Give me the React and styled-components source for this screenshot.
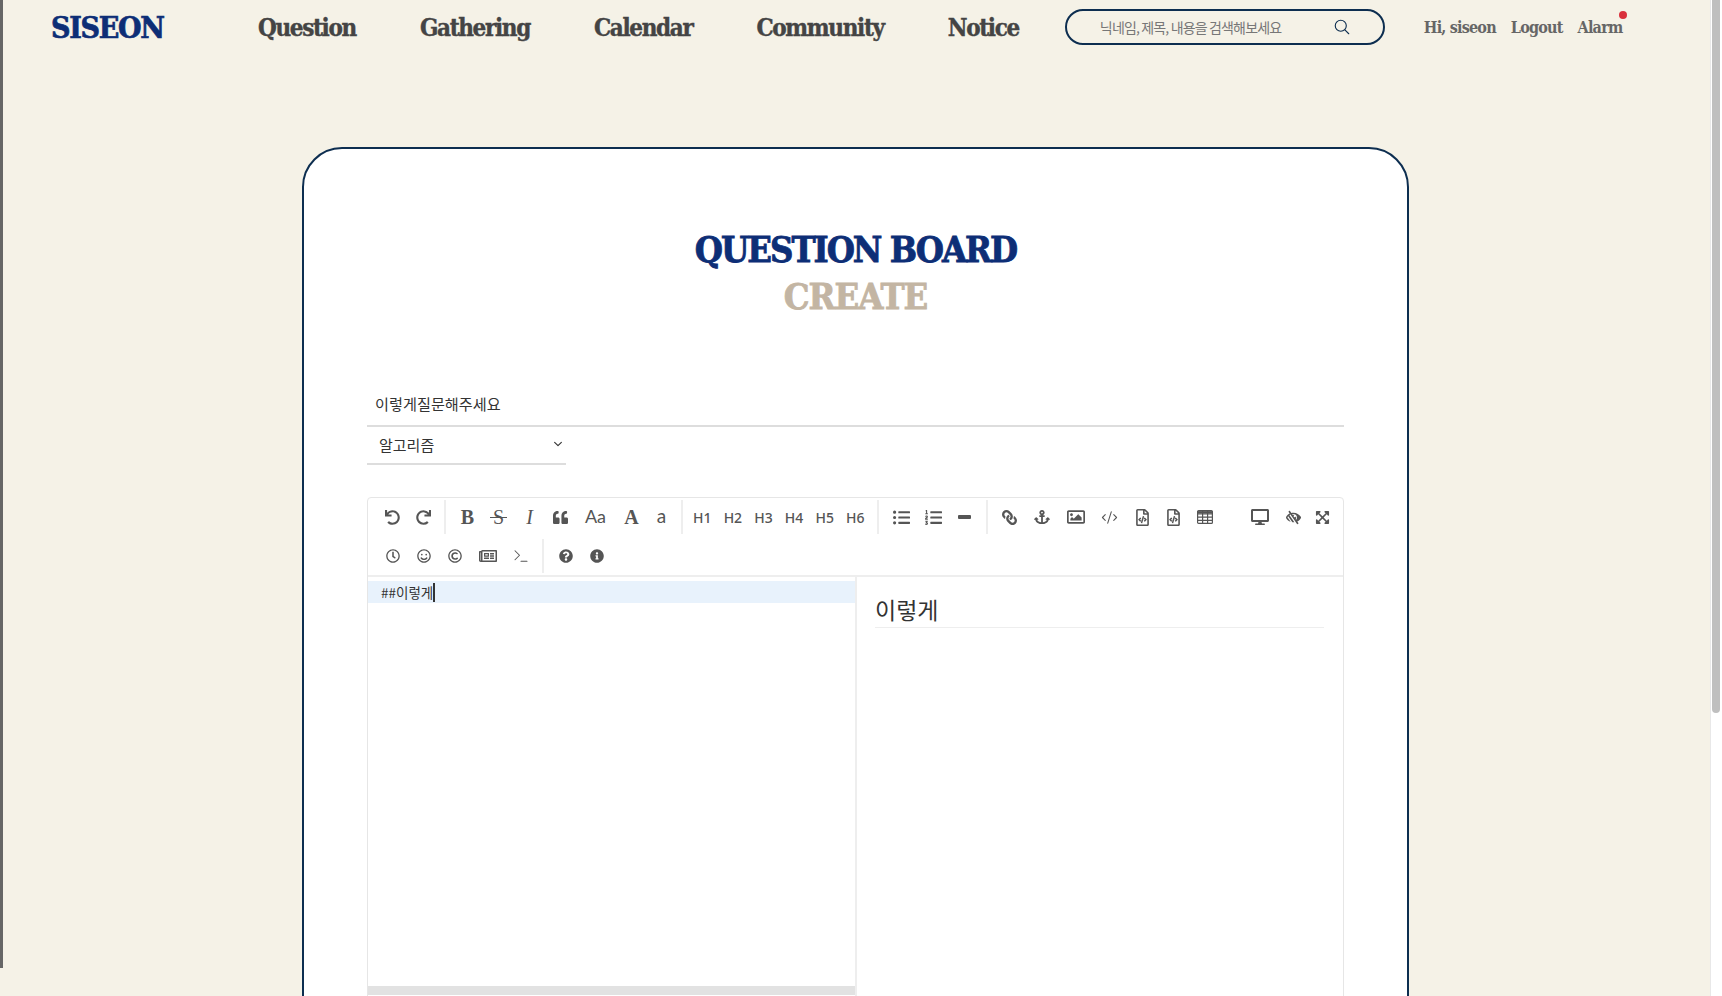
import React from "react";
import styled, { createGlobalStyle } from "styled-components";
import {
  FaUndo, FaRedo, FaQuoteLeft, FaListUl, FaListOl,
  FaLink, FaAnchor, FaRegImage, FaRegFileCode, FaDesktop, FaLowVision, FaExpandArrowsAlt,
  FaRegClock, FaRegSmile, FaRegCopyright, FaRegNewspaper, FaQuestionCircle, FaInfoCircle,
} from "react-icons/fa";
import { IoSearchOutline, IoChevronDown } from "react-icons/io5";
import { CodeXml, Terminal } from "lucide-react";

const GlobalStyle = createGlobalStyle`
  html, body { margin: 0; padding: 0; overflow: hidden; }
  * { box-sizing: border-box; }
  body { font-family: "Noto Sans CJK KR", "Noto Sans", sans-serif; }
`;

const slab = `"DejaVu Serif Condensed", "DejaVu Serif", serif`;

const Screen = styled.div`
  display: flex;
  width: 1722px;
  height: 996px;
  overflow: hidden;
  background: #f5f2e7;
`;
const WindowEdge = styled.div`
  flex: 0 0 3px;
  height: 968px;
  background: #666;
`;
const Page = styled.div`
  flex: 1;
  min-width: 0;
`;
const ScrollTrack = styled.div`
  flex: 0 0 12px;
  background: #fff;
  border-left: 1px solid #e8e8e8;
  padding: 0 2px 0 1px;
`;
const ScrollThumb = styled.div`
  height: 713px;
  background: #bfbfbf;
  border-radius: 0 0 4px 4px;
`;

const Header = styled.header`
  display: flex;
  align-items: center;
  height: 54px;
  padding-left: 48px;
`;
const Logo = styled.div`
  flex: 0 0 207px;
  font: 700 30px ${slab};
  color: #0d2e76;
  letter-spacing: -1.3px;
  -webkit-text-stroke: 0.7px #0d2e76;
`;
const Nav = styled.nav`
  display: flex;
  gap: 64px;
`;
const NavLink = styled.a`
  font: 700 24px ${slab};
  color: #444;
  letter-spacing: -1.35px;
  -webkit-text-stroke: 0.4px #444;
`;
const Search = styled.div`
  display: flex;
  align-items: center;
  justify-content: space-between;
  width: 320px;
  height: 36px;
  margin-left: 46px;
  padding: 0 32px 0 33px;
  border: 2px solid #0d2e50;
  border-radius: 18px;
  font-size: 14px;
  color: #777;
  letter-spacing: -0.85px;
  svg { color: #0d2e50; }
`;
const UserMenu = styled.div`
  display: flex;
  gap: 15px;
  margin-left: 39px;
`;
const UserLink = styled.a`
  position: relative;
  font: 700 16px ${slab};
  color: #666;
  letter-spacing: -0.8px;
`;
const AlertDot = styled.span`
  position: absolute;
  top: -7px;
  right: -5px;
  width: 8px;
  height: 8px;
  border-radius: 50%;
  background: #d9303c;
`;

const Card = styled.main`
  width: 1107px;
  height: 1200px;
  margin: 93px 0 0 299px;
  padding: 77px 63px 0;
  background: #fff;
  border: 2px solid #0d2e50;
  border-radius: 40px 40px 0 0;
`;
const Title = styled.h1`
  margin: 0;
  text-align: center;
  font: 700 36px/47px ${slab};
  letter-spacing: ${(p) => p.$spacing}px;
  color: ${(p) => p.$color};
  -webkit-text-stroke: 0.8px ${(p) => p.$color};
`;
const TitleInput = styled.div`
  margin-top: 63px;
  height: 44px;
  padding: 9px 8px 0;
  border-bottom: 2px solid #ddd;
  font-size: 15.2px;
  color: #333;
`;
const Select = styled.div`
  display: flex;
  align-items: center;
  justify-content: space-between;
  width: 199px;
  height: 38px;
  padding: 0 2px 2px 12px;
  border-bottom: 2px solid #ddd;
  font-size: 15px;
  color: #333;
`;
const Editor = styled.section`
  margin-top: 32px;
  border: 1px solid #e6e6e6;
  border-radius: 4px 4px 0 0;
`;
const Toolbar = styled.div`
  height: 79px;
  padding: 0 6px 0 9px;
  border-bottom: 2px solid #eee;
`;
const ToolRow = styled.div`
  display: flex;
  align-items: center;
  height: 38.5px;
`;
const Tool = styled.button`
  display: flex;
  align-items: center;
  justify-content: center;
  flex: 0 0 ${(p) => p.$w || 31}px;
  height: 34px;
  padding: 0;
  border: 0;
  background: none;
  color: #555;
  font: 500 14px "Noto Sans", sans-serif;
  svg { transform: ${(p) => (p.$flip ? "scaleX(-1)" : "none")}; }
`;
const Glyph = styled.span`
  font: ${(p) => p.$font};
  position: relative;
  top: ${(p) => p.$top || 0}px;
`;
const StruckGlyph = styled(Glyph)`
  &::after {
    content: "";
    position: absolute;
    left: -3px;
    right: -3px;
    top: 50%;
    height: 1px;
    background: #555;
  }
`;
const MinusBar = styled.span`
  width: 13px;
  height: 4px;
  border-radius: 1px;
  background: #555;
`;
const Divider = styled.span`
  flex: 0 0 2px;
  height: 34px;
  margin: 0 ${(p) => p.$right ?? 6}px 0 ${(p) => p.$left ?? 6}px;
  background: #eee;
`;
const Spacer = styled.span`
  flex: 1;
`;
const Panes = styled.div`
  display: flex;
  height: 470px;
`;
const SourcePane = styled.div`
  position: relative;
  flex: 0 0 489px;
  padding-top: 4px;
  border-right: 2px solid #eee;
`;
const ActiveLine = styled.div`
  display: flex;
  align-items: center;
  height: 22px;
  padding-left: 13px;
  background: #e8f2fc;
  font-size: 13.5px;
  color: #333;
`;
const Caret = styled.span`
  width: 2px;
  height: 19px;
  background: #333;
`;
const HScroll = styled.div`
  position: absolute;
  left: 0;
  right: 0;
  bottom: 52px;
  height: 9px;
  background: #e2e2e2;
`;
const PreviewPane = styled.div`
  flex: 1;
  padding: 17px 19px 0 18px;
`;
const PreviewHeading = styled.h2`
  margin: 0;
  height: 34px;
  border-bottom: 1px solid #eee;
  font: 400 23px/30px "Noto Sans CJK KR", sans-serif;
  color: #333;
`;

const TableIcon = () => (
  <svg width="16" height="14" viewBox="0 0 16 14" fill="none" stroke="#555" strokeWidth="1.2">
    <rect x="0.6" y="0.6" width="14.8" height="12.8" rx="1" />
    <path d="M0.6 4h14.8M0.6 7.2h14.8M0.6 10.4h14.8M5.6 .6v12.8M10.6 .6v12.8" />
    <path d="M0.6 2.4h14.8" strokeWidth="2.6" />
  </svg>
);

const App = () => {
  return (
    <Screen>
      <GlobalStyle />
      <WindowEdge />
      <Page>
        <Header>
          <Logo>SISEON</Logo>
          <Nav>
            <NavLink>Question</NavLink>
            <NavLink>Gathering</NavLink>
            <NavLink>Calendar</NavLink>
            <NavLink>Community</NavLink>
            <NavLink>Notice</NavLink>
          </Nav>
          <Search>
            닉네임, 제목, 내용을 검색해보세요
            <IoSearchOutline size={18} />
          </Search>
          <UserMenu>
            <UserLink>Hi, siseon</UserLink>
            <UserLink>Logout</UserLink>
            <UserLink>Alarm<AlertDot /></UserLink>
          </UserMenu>
        </Header>
        <Card>
          <Title $color="#0d2e76" $spacing={-2}>QUESTION BOARD</Title>
          <Title $color="#c3b5a3" $spacing={-1}>CREATE</Title>
          <TitleInput>이렇게질문해주세요</TitleInput>
          <Select>
            알고리즘
            <IoChevronDown size={12} />
          </Select>
          <Editor>
            <Toolbar>
              <ToolRow>
                <Tool><FaUndo size={15} /></Tool>
                <Tool><FaRedo size={15} /></Tool>
                <Divider $left={5} />
                <Tool><Glyph $font={`700 20px "Liberation Serif", serif`}>B</Glyph></Tool>
                <Tool><StruckGlyph $font={`400 20px "Liberation Serif", serif`}>S</StruckGlyph></Tool>
                <Tool><Glyph $font={`italic 400 20px "Liberation Serif", serif`}>I</Glyph></Tool>
                <Tool><FaQuoteLeft size={15} /></Tool>
                <Tool $w={39}><Glyph $top={-1} $font={`400 18px Lato, sans-serif`}>Aa</Glyph></Tool>
                <Tool $w={33}><Glyph $font={`700 20px "Liberation Serif", serif`}>A</Glyph></Tool>
                <Tool $w={27}><Glyph $top={-2} $font={`400 19px Lato, sans-serif`}>a</Glyph></Tool>
                <Divider $right={4} />
                <Tool $w={30.6}>H1</Tool>
                <Tool $w={30.6}>H2</Tool>
                <Tool $w={30.6}>H3</Tool>
                <Tool $w={30.6}>H4</Tool>
                <Tool $w={30.6}>H5</Tool>
                <Tool $w={30.6}>H6</Tool>
                <Divider $left={6.4} />
                <Tool $w={33}><FaListUl size={17} /></Tool>
                <Tool $w={32}><FaListOl size={17} /></Tool>
                <Tool $w={30}><MinusBar /></Tool>
                <Divider />
                <Tool $flip><FaLink size={15} /></Tool>
                <Tool $w={34}><FaAnchor size={16} /></Tool>
                <Tool $w={34}><FaRegImage size={18} /></Tool>
                <Tool $w={34}><CodeXml size={17} strokeWidth={1.5} /></Tool>
                <Tool $w={32}><FaRegFileCode size={17} /></Tool>
                <Tool $w={30}><FaRegFileCode size={17} /></Tool>
                <Tool $w={32}><TableIcon /></Tool>
                <Spacer />
                <Tool $w={37}><FaDesktop size={18} /></Tool>
                <Tool $w={30}><FaLowVision size={15} /></Tool>
                <Tool $w={29}><FaExpandArrowsAlt size={15} /></Tool>
              </ToolRow>
              <ToolRow>
                <Tool><FaRegClock size={14} /></Tool>
                <Tool><FaRegSmile size={14} /></Tool>
                <Tool><FaRegCopyright size={14} /></Tool>
                <Tool $w={35}><FaRegNewspaper size={18} /></Tool>
                <Tool $w={31}><Terminal size={18} strokeWidth={1.4} /></Tool>
                <Divider />
                <Tool><FaQuestionCircle size={14} /></Tool>
                <Tool><FaInfoCircle size={14} /></Tool>
              </ToolRow>
            </Toolbar>
            <Panes>
              <SourcePane>
                <ActiveLine>##이렇게<Caret /></ActiveLine>
                <HScroll />
              </SourcePane>
              <PreviewPane>
                <PreviewHeading>이렇게</PreviewHeading>
              </PreviewPane>
            </Panes>
          </Editor>
        </Card>
      </Page>
      <ScrollTrack>
        <ScrollThumb />
      </ScrollTrack>
    </Screen>
  );
};

export default App;
